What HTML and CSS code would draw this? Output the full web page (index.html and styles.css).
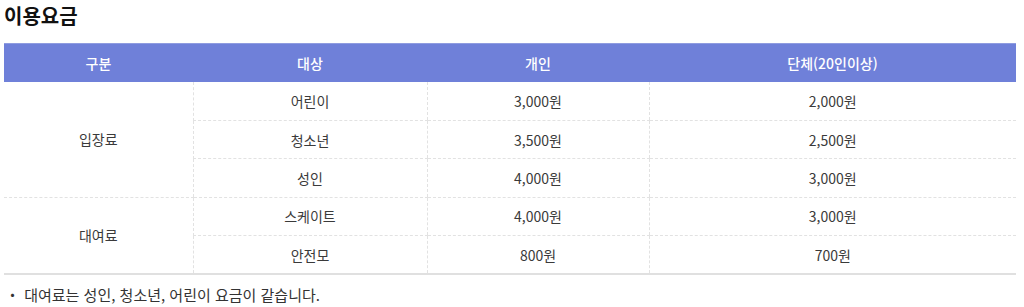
FILE: index.html
```html
<!DOCTYPE html>
<html lang="ko">
<head>
<meta charset="utf-8">
<link rel="stylesheet" href="styles.css">
</head>
<body>
<div class="wrap">
  <h2 class="title">이용요금</h2>
  <table class="fee">
    <thead>
      <tr>
        <th class="c1">구분</th>
        <th class="c2">대상</th>
        <th class="c3">개인</th>
        <th class="c4">단체(20인이상)</th>
      </tr>
    </thead>
    <tbody>
      <tr><td rowspan="3">입장료</td><td>어린이</td><td>3,000원</td><td>2,000원</td></tr>
      <tr><td>청소년</td><td>3,500원</td><td>2,500원</td></tr>
      <tr class="grp-end"><td>성인</td><td>4,000원</td><td>3,000원</td></tr>
      <tr><td rowspan="2">대여료</td><td>스케이트</td><td>4,000원</td><td>3,000원</td></tr>
      <tr class="last"><td>안전모</td><td>800원</td><td>700원</td></tr>
    </tbody>
  </table>
  <p class="note">・ 대여료는 성인, 청소년, 어린이 요금이 같습니다.</p>
</div>
</body>
</html>
```

FILE: styles.css
```css
html, body {
  margin: 0;
  padding: 0;
  background: #fff;
}
body {
  font-family: "Noto Sans CJK KR", "Noto Sans", sans-serif;
  color: #333;
}
.wrap {
  width: 1012px;
  margin-left: 4px;
}
.title {
  margin: 0;
  padding-top: 3px;
  height: 43px;
  box-sizing: border-box;
  font-size: 20px;
  line-height: 26px;
  font-weight: 700;
  color: #111;
}
.fee {
  width: 1012px;
  border-collapse: collapse;
  table-layout: fixed;
  font-size: 14px;
}
.fee th {
  background: #6f80d9;
  color: #fff;
  font-weight: 500;
  height: 38px;
  padding: 0;
  border-top: 1px solid #8f9ce0;
  text-align: center;
}
.c1 { width: 189px; }
.c2 { width: 234px; }
.c3 { width: 222px; }
.c4 { width: auto; }
.fee td {
  height: 38.4px;
  padding: 0;
  text-align: center;
  color: #3a3a3a;
  border-bottom: 1px dashed #e2e2e2;
  border-left: 1px dashed #e2e2e2;
  box-sizing: border-box;
}
.fee tr td:first-child[rowspan] {
  border-left: none;
}
.fee tr.last td,
.fee td[rowspan="2"] {
  border-bottom: 2px solid #e0e0e0;
}
.note {
  margin: 0;
  padding-top: 10px;
  padding-left: 1px;
  font-size: 15px;
  line-height: 20px;
  color: #333;
}
```
